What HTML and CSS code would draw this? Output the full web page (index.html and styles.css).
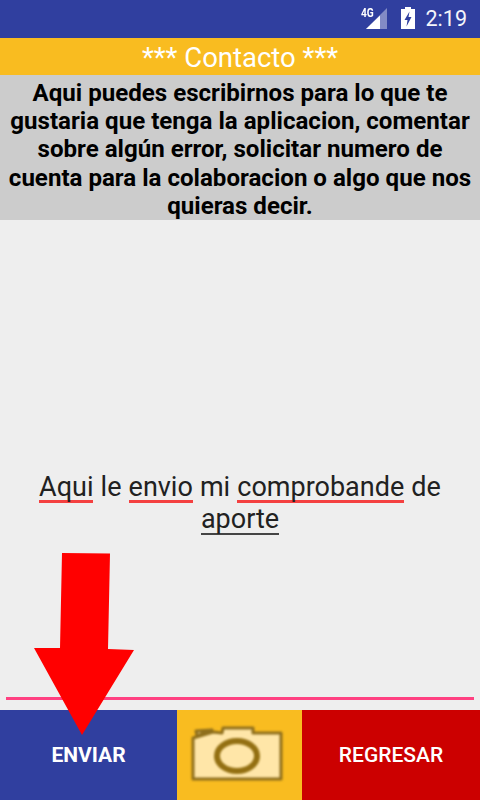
FILE: index.html
```html
<!DOCTYPE html>
<html lang="es">
<head>
<meta charset="utf-8">
<title>Contacto</title>
<link rel="stylesheet" href="styles.css">
</head>
<body>
<div class="screen">
  <header class="status">
    <span class="net">4G</span>
    <svg class="signal" width="22" height="22" viewBox="0 0 22 22"><path class="sig-dim" d="M21 0V21H0Z"/><path class="sig-on" d="M14 7.500V21H0Z"/></svg>
    <svg class="battery" width="14" height="22" viewBox="0 0 14 22"><path class="bat" fill-rule="evenodd" d="M4 0H10V2H14V22H0V2H4ZM8.500 4.500 3.500 13H6.500L5.500 19.500 10.500 10H7.500Z"/></svg>
    <span class="clock">2:19</span>
  </header>
  <h1 class="title">*** Contacto ***</h1>
  <p class="intro">Aqui puedes escribirnos para lo que te gustaria que tenga la aplicacion, comentar sobre algún error, solicitar numero de cuenta para la colaboracion o algo que nos quieras decir.</p>
  <main class="body">
    <p class="message"><span class="spell">Aqui</span> le <span class="spell">envio</span> mi <span class="spell">comprobande</span> de <span class="plain">aporte</span></p>
    <div class="rule"></div>
  </main>
  <footer class="actions">
    <button class="btn send">ENVIAR</button>
    <button class="btn photo" aria-label="Foto">
      <svg class="camera" width="92" height="54" viewBox="0 0 92 54">
        <path class="cam" d="M1 11 21 5 30 6 31 1H61V6H89V52H1Z"/>
        <path class="cam" d="M4 4 20 3 5 9Z"/>
        <ellipse class="lens" cx="45" cy="29" rx="20" ry="15"/>
      </svg>
    </button>
    <button class="btn back">REGRESAR</button>
  </footer>
  <svg class="arrow" width="100" height="182" viewBox="0 0 100 182"><path d="M28 0 76 .5 74 96 100 97 48 182 0 95 26 95Z"/></svg>
</div>
</body>
</html>
```
FILE: styles.css
```css
* { box-sizing: border-box; }
html, body { margin: 0; padding: 0; }
body { width: 480px; height: 800px; overflow: hidden; font-family: Roboto, sans-serif; }
.screen { position: relative; width: 480px; height: 800px; display: flex; flex-direction: column; background: #eeeeee; }
.status { flex: 0 0 38px; background: #303f9f; display: flex; align-items: flex-start; justify-content: flex-end; color: #fff; padding-right: 13px; }
.net { font-size: 12px; font-weight: 700; line-height: 12px; margin-top: 7px; width: 6px; transform: scaleX(.85); transform-origin: left; }
.signal { margin: 8px 0 0 -1px; }
.sig-dim { fill: #fff; fill-opacity: .4; }
.sig-on { fill: #fff; }
.battery { margin: 7px 0 0 13px; }
.bat { fill: #fff; }
.clock { font-size: 21.500px; line-height: 38px; margin-left: 11px; font-weight: 400; color: #f4f5fa; }
.title { flex: 0 0 37px; min-height: 0; margin: 0; background: #f9bc20; color: #fff; font-size: 27.500px; font-weight: 400; line-height: 39px; text-align: center; }
.intro { flex: 0 0 145px; min-height: 0; margin: 0; background: #cccccc; color: #000; font-size: 24.100px; font-weight: 700; line-height: 28.200px; text-align: center; padding: 4px 0 0; }
.body { flex: 1; display: flex; flex-direction: column; justify-content: flex-end; padding: 0 6px 10px; }
.message { margin: 0 0 162px; font-size: 27px; word-spacing: .4px; line-height: 32px; text-align: center; color: #212121; }
.spell { border-bottom: 3px solid #f44040; display: inline-block; line-height: 29px; height: 30px; }
.plain { border-bottom: 2px solid #444; display: inline-block; line-height: 29px; height: 30px; }
.rule { height: 3px; background: #ff4081; }
.actions { flex: 0 0 90px; display: flex; }
.btn { border: 0; padding: 0; margin: 0; font-family: Roboto, sans-serif; font-size: 21px; font-weight: 700; color: #fff; display: flex; align-items: center; justify-content: center; }
.send { width: 177px; background: #303f9f; }
.photo { width: 125px; background: #f9bc20; }
.back { width: 178px; background: #cc0000; font-weight: 500; }
.camera { margin: 0 3px 2px 0; filter: blur(1px); overflow: visible; }
.cam { fill: #ffe6a8; stroke: #8f6f1c; stroke-width: 3; stroke-linejoin: round; }
.lens { fill: #ffe6a8; stroke: #947012; stroke-width: 6; }
.arrow { position: absolute; left: 34px; top: 553px; }
.arrow path { fill: #ff0000; }
```
